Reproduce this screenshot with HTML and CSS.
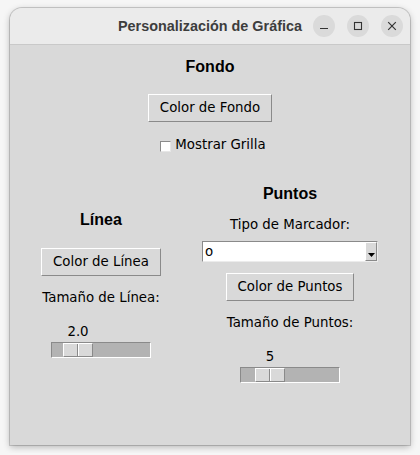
FILE: index.html
```html
<!DOCTYPE html>
<html lang="es">
<head>
<meta charset="utf-8">
<title>Personalización de Gráfica</title>
<link rel="stylesheet" href="styles.css">
</head>
<body>
<div class="window">
  <header class="titlebar">
    <span class="title">Personalización de Gráfica</span>
    <div class="wm-buttons">
      <span class="wm-btn"><svg width="22" height="22" viewBox="0 0 22 22"><path d="M7 13.5H15" stroke="#333" stroke-width="1.2" fill="none"/></svg></span>
      <span class="wm-btn"><svg width="22" height="22" viewBox="0 0 22 22"><rect x="7.5" y="7.5" width="7" height="7" stroke="#333" stroke-width="1.1" fill="none"/></svg></span>
      <span class="wm-btn"><svg width="22" height="22" viewBox="0 0 22 22"><path d="M7.2 7.2L14.8 14.8M14.8 7.2L7.2 14.8" stroke="#333" stroke-width="1.2" fill="none"/></svg></span>
    </div>
  </header>
  <main class="content">
    <section class="group fondo">
      <h2 class="heading">Fondo</h2>
      <button class="tk-btn">Color de Fondo</button>
      <label class="check"><span class="check-box"></span>Mostrar Grilla</label>
    </section>
    <div class="columns">
      <section class="group col-left">
        <h2 class="heading">Línea</h2>
        <button class="tk-btn btn-linea">Color de Línea</button>
        <span class="label label-size">Tamaño de Línea:</span>
        <div class="scale" style="--pos:11px">
          <span class="scale-value">2.0</span>
          <div class="trough"><span class="slider"></span></div>
        </div>
      </section>
      <section class="group col-right">
        <h2 class="heading">Puntos</h2>
        <span class="label label-marker">Tipo de Marcador:</span>
        <div class="combo">
          <span class="combo-text">o</span>
          <span class="combo-arrow"><svg width="7" height="4" viewBox="0 0 7 4"><path d="M0 0H7L3.5 4Z" fill="#000"/></svg></span>
        </div>
        <button class="tk-btn btn-puntos">Color de Puntos</button>
        <span class="label label-size">Tamaño de Puntos:</span>
        <div class="scale" style="--pos:14px">
          <span class="scale-value">5</span>
          <div class="trough"><span class="slider"></span></div>
        </div>
      </section>
    </div>
  </main>
</div>
</body>
</html>
```

FILE: styles.css
```css
html, body {
  margin: 0;
  background: #f6f6f6;
}

body {
  padding: 8px 10px;
}

.window {
  width: 400px;
  height: 437px;
  background: #d9d9d9;
  border-radius: 12px 12px 0 0;
  box-shadow: 0 0 0 1px rgba(0, 0, 0, 0.16), 0 2px 7px rgba(0, 0, 0, 0.28);
  overflow: hidden;
  display: flex;
  flex-direction: column;
}

.titlebar {
  height: 37px;
  box-sizing: border-box;
  flex: none;
  background: #ebebeb;
  border-bottom: 1px solid #c9c9c9;
  display: grid;
  grid-template-columns: 1fr auto 1fr;
  align-items: center;
}

.title {
  grid-column: 2;
  font-family: "Liberation Sans", Arial, sans-serif;
  font-weight: bold;
  font-size: 14.4px;
  color: #3d3d3d;
  white-space: nowrap;
}

.wm-buttons {
  grid-column: 3;
  justify-self: end;
  display: flex;
  gap: 12px;
  padding-right: 7px;
}

.wm-btn {
  width: 22px;
  height: 22px;
  border-radius: 50%;
  background: #dadada;
  display: flex;
}

.content {
  flex: 1;
  font-family: "DejaVu Sans", sans-serif;
  font-size: 13.333px;
  line-height: 16px;
  color: #000;
}

.group {
  display: flex;
  flex-direction: column;
  align-items: center;
}

.fondo {
  padding-top: 12px;
}

.heading {
  margin: 0;
  font-family: "Liberation Sans", Arial, sans-serif;
  font-weight: bold;
  font-size: 16px;
  line-height: 19px;
}

.tk-btn {
  font-family: "DejaVu Sans", sans-serif;
  font-size: 13.333px;
  line-height: 16px;
  height: 28px;
  box-sizing: border-box;
  padding: 0 11px;
  margin: 0;
  background: #d9d9d9;
  color: #000;
  border: 1px solid;
  border-color: #ffffff #8a8a8a #8a8a8a #ffffff;
  border-radius: 0;
}

.fondo .tk-btn {
  margin-top: 18px;
}

.check {
  margin-top: 15px;
  padding-left: 6px;
  display: flex;
  align-items: center;
  gap: 4px;
}

.check-box {
  width: 11px;
  height: 11px;
  box-sizing: border-box;
  margin-top: 2px;
  background: #fff;
  border: 1px solid;
  border-color: #8a8a8a #e6e6e6 #e6e6e6 #8a8a8a;
}

.columns {
  display: flex;
  align-items: center;
  margin-top: 31px;
}

.col-left {
  width: 182px;
}

.col-right {
  width: 196px;
}

.btn-linea {
  margin-top: 19px;
}

.label-size {
  margin-top: 14px;
}

.label-marker {
  margin-top: 14px;
}

.combo {
  width: 176px;
  height: 21px;
  box-sizing: border-box;
  margin-top: 8px;
  display: flex;
  background: #fff;
  border: 1px solid;
  border-color: #8a8a8a #ececec #ececec #8a8a8a;
}

.combo-text {
  flex: 1;
  padding-left: 2px;
  line-height: 19px;
}

.combo-arrow {
  width: 12px;
  box-sizing: border-box;
  background: #d9d9d9;
  border: 1px solid;
  border-color: #ffffff #8a8a8a #8a8a8a #ffffff;
  display: flex;
  align-items: flex-end;
  justify-content: center;
  padding-bottom: 3px;
}

.btn-puntos {
  margin-top: 11px;
}

.scale {
  width: 100px;
  margin-top: 18px;
}

.scale-value {
  display: block;
  width: max-content;
  margin-left: calc(var(--pos) + 16px);
  transform: translateX(-50%);
}

.trough {
  position: relative;
  margin-top: 2px;
  height: 16px;
  box-sizing: border-box;
  background: #b3b3b3;
  border: 1px solid;
  border-color: #8a8a8a #ffffff #ffffff #8a8a8a;
}

.slider {
  position: absolute;
  top: 0;
  left: var(--pos);
  width: 30px;
  height: 14px;
  box-sizing: border-box;
  background: #d9d9d9;
  border: 1px solid;
  border-color: #ffffff #8a8a8a #8a8a8a #ffffff;
}

.slider::after {
  content: "";
  position: absolute;
  left: 13px;
  top: 0;
  bottom: 0;
  width: 1px;
  background: #8a8a8a;
  border-right: 1px solid #ffffff;
}
```
